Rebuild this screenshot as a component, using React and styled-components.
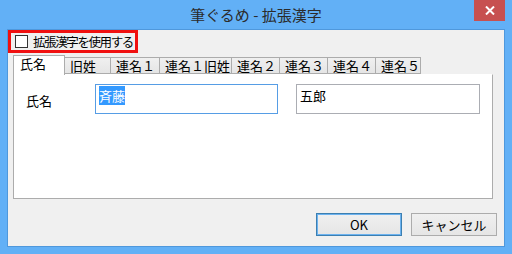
import React from "react";
import styled, { createGlobalStyle } from "styled-components";

const GlobalStyle = createGlobalStyle`
  * { box-sizing: border-box; }
  body {
    margin: 0;
    font-family: "Noto Sans CJK JP", "Noto Sans", sans-serif;
    font-size: 12px;
    color: #000;
  }
`;

const tabs = ["氏名", "旧姓", "連名１", "連名１旧姓", "連名２", "連名３", "連名４", "連名５"];
const tabWidths = [51, 46, 49, 72, 48, 48, 48, 45];

const Window = styled.div`
  width: 512px;
  height: 254px;
  background: #62b0f6;
  display: flex;
  flex-direction: column;
`;

const TitleBar = styled.div`
  height: 30px;
  display: grid;
  grid-template-columns: 1fr auto 1fr;
  align-items: start;
`;

const Title = styled.div`
  grid-column: 2;
  font-size: 15px;
  line-height: 30px;
  color: #2b2b2b;
  white-space: pre;
`;

const CloseButton = styled.div`
  grid-column: 3;
  justify-self: end;
  margin-right: 7px;
  width: 31px;
  height: 21px;
  background: #c75050;
  display: flex;
  align-items: center;
  justify-content: center;
`;

const Client = styled.div`
  flex: 1;
  margin: 0 8px 8px 8px;
  background: #f0f0f0;
  box-shadow: 0 0 0 1px #4f98dc;
  display: flex;
  flex-direction: column;
`;

const Highlight = styled.label`
  width: 130px;
  height: 23px;
  border: 3px solid #f01010;
  display: flex;
  align-items: center;
  gap: 5px;
  padding-left: 4px;
  font-size: 12.5px;
  letter-spacing: -1.4px;
  white-space: nowrap;
`;

const CheckBox = styled.span`
  flex: none;
  width: 13px;
  height: 13px;
  border: 1px solid #333;
  background: #fff;
`;

const TabRow = styled.div`
  display: flex;
  align-items: flex-end;
  margin: 2px 0 0 5px;
  height: 19px;
  position: relative;
  z-index: 1;
`;

const Tab = styled.div`
  flex: none;
  height: ${(p) => (p.$active ? "20px" : "17px")};
  margin-bottom: ${(p) => (p.$active ? "-1px" : "0")};
  border: 1px solid #acacac;
  border-bottom: ${(p) => (p.$active ? "none" : "1px solid #acacac")};
  margin-left: -1px;
  background: ${(p) => (p.$active ? "#fff" : "linear-gradient(#f0f0f0, #e5e5e5)")};
  font-size: 13px;
  line-height: 16px;
  white-space: nowrap;
  padding-left: ${(p) => (p.$active ? "6px" : "5px")};
  &:first-child { margin-left: 0; }
`;

const Panel = styled.div`
  margin-left: 5px;
  width: 480px;
  height: 125px;
  background: #fff;
  border: 1px solid #acacac;
  border-top: 1px solid #fff;
  display: flex;
  align-items: flex-start;
  gap: 18px;
  padding: 9px 0 0 12px;
`;

const Label = styled.div`
  flex: none;
  width: 51px;
  font-size: 13px;
  margin-top: 7px;
`;

const Field = styled.div`
  flex: none;
  width: ${(p) => p.$w}px;
  height: 30px;
  border: 1px solid ${(p) => (p.$focus ? "#569de5" : "#abadb3")};
  padding: 2px 3px;
  font-size: 13px;
  line-height: 17px;
`;

const Selected = styled.span`
  background: #3399ff;
  color: #fff;
`;

const Footer = styled.div`
  display: flex;
  justify-content: flex-end;
  gap: 9px;
  margin: 14px 7px 0 0;
`;

const Button = styled.div`
  width: 86px;
  height: 23px;
  border: 1px solid ${(p) => (p.$default ? "#3c7fb1" : "#acacac")};
  box-shadow: ${(p) => (p.$default ? "inset 0 0 0 1px #6cb2ef" : "none")};
  background: linear-gradient(#f0f0f0, #e5e5e5);
  display: flex;
  align-items: center;
  justify-content: center;
  font-size: 13px;
`;

export default function App() {
  return (
    <>
      <GlobalStyle />
      <Window>
        <TitleBar>
          <Title>筆ぐるめ - 拡張漢字</Title>
          <CloseButton>
            <svg width="10" height="9" viewBox="0 0 10 9">
              <path d="M1 0.5 L9 8.5 M9 0.5 L1 8.5" stroke="#fff" strokeWidth="2" />
            </svg>
          </CloseButton>
        </TitleBar>
        <Client>
          <Highlight>
            <CheckBox />
            拡張漢字を使用する
          </Highlight>
          <TabRow>
            {tabs.map((t, i) => (
              <Tab key={t} $active={i === 0} style={{ width: tabWidths[i] + 1 }}>
                {t}
              </Tab>
            ))}
          </TabRow>
          <Panel>
            <Label>氏名</Label>
            <Field $w={183} $focus>
              <Selected>斉藤</Selected>
            </Field>
            <Field $w={184}>五郎</Field>
          </Panel>
          <Footer>
            <Button $default>OK</Button>
            <Button>キャンセル</Button>
          </Footer>
        </Client>
      </Window>
    </>
  );
}
